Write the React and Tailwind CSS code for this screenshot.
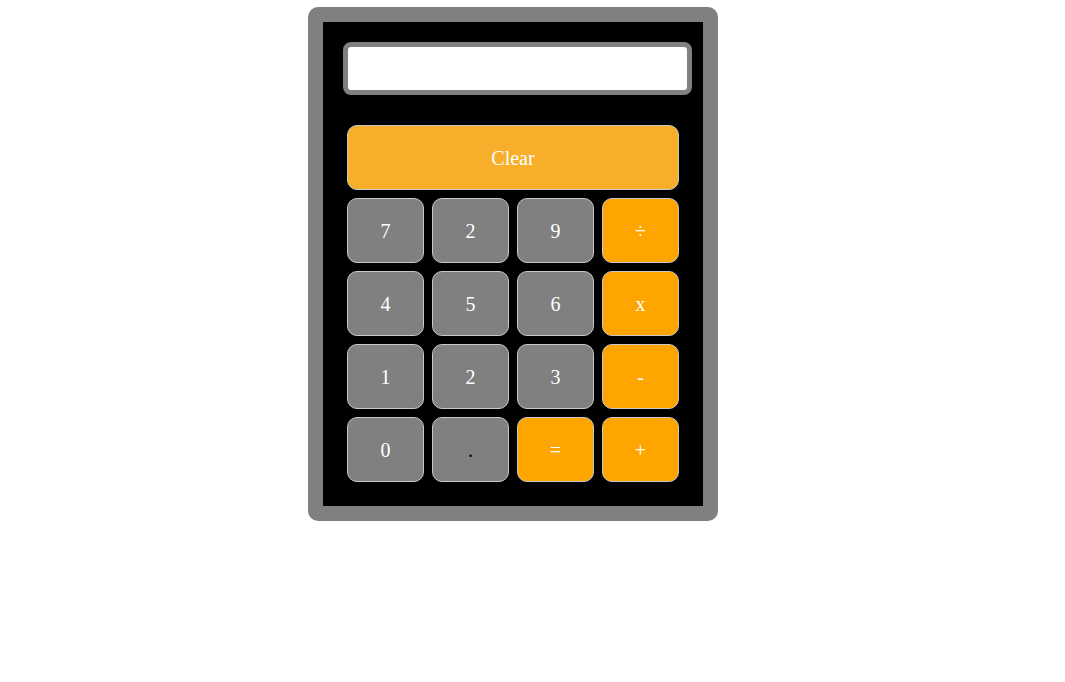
export default function App() {
  const keys = [
    { k: "7" }, { k: "2" }, { k: "9" }, { k: "÷", op: true },
    { k: "4" }, { k: "5" }, { k: "6" }, { k: "x", op: true },
    { k: "1" }, { k: "2" }, { k: "3" }, { k: "-", op: true },
    { k: "0" }, { k: ".", dark: true }, { k: "=", op: true }, { k: "+", op: true },
  ];
  return (
    <div className="min-h-[682px] w-full bg-white" style={{ fontFamily: '"Liberation Serif", "Times New Roman", serif' }}>
      <div className="ml-[308px] pt-[7px]">
        <div className="w-[410px] rounded-[10px] bg-[#808080] p-[15px]">
          <div className="bg-black pt-[20px] pb-[24px]">
            <div className="ml-[20px] h-[53px] w-[349px] rounded-[8px] border-[5px] border-[#808080] bg-white" />
            <div className="ml-[24px] mt-[30px] w-[332px]">
              <button className="flex h-[65px] w-[332px] items-center justify-center rounded-[10px] border border-[#c8c8c8] bg-[#f6ae2b] text-[20px] text-white">
                Clear
              </button>
              <div className="mt-[8px] grid grid-cols-[repeat(4,77px)] gap-[8px]">
                {keys.map((b, i) => (
                  <button
                    key={i}
                    className={
                      "flex h-[65px] w-[77px] items-center justify-center rounded-[10px] border border-[#c8c8c8] text-[20px] " +
                      (b.op ? "bg-[#ffa500] text-white" : "bg-[#808080] ") +
                      (b.dark ? "text-black" : b.op ? "" : "text-white")
                    }
                  >
                    {b.k}
                  </button>
                ))}
              </div>
            </div>
          </div>
        </div>
      </div>
    </div>
  );
}
